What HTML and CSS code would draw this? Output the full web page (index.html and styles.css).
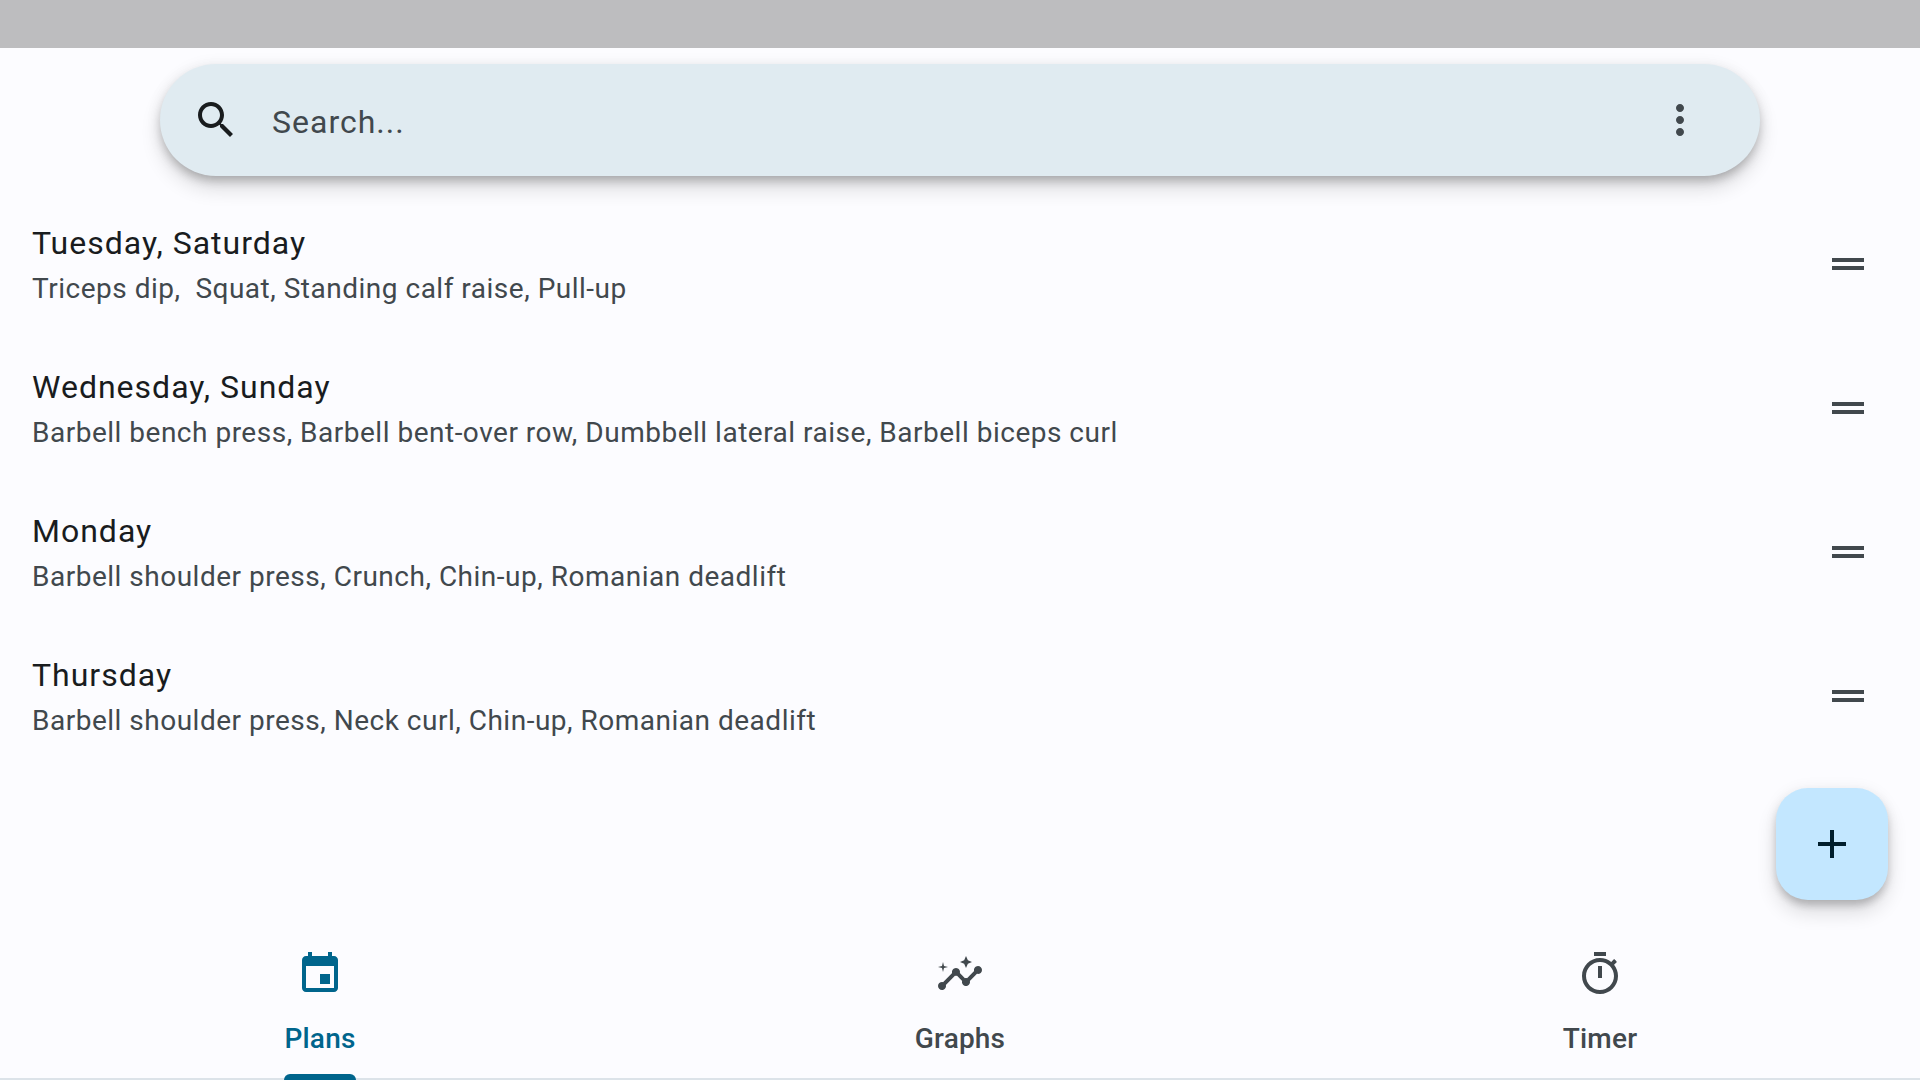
FILE: index.html
```html
<!DOCTYPE html>
<html lang="en">
<head>
  <meta charset="utf-8">
  <meta name="viewport" content="width=device-width, initial-scale=1">
  <title>Plans</title>
  <link rel="stylesheet" href="styles.css">
</head>
<body>
  <div class="app">
    <div class="status-bar"></div>

    <header class="top">
      <form class="search" role="search">
        <svg class="icon search-icon" viewBox="0 0 24 24" aria-hidden="true"><path d="M15.5 14h-.79l-.28-.27C15.41 12.59 16 11.11 16 9.5 16 5.91 13.09 3 9.5 3S3 5.91 3 9.5 5.91 16 9.5 16c1.61 0 3.09-.59 4.23-1.57l.27.28v.79l5 4.99L20.49 19l-4.99-5zm-6 0C7.01 14 5 11.99 5 9.5S7.01 5 9.5 5 14 7.01 14 9.5 11.99 14 9.5 14z"/></svg>
        <input class="search-input" type="text" placeholder="Search..." aria-label="Search">
        <button class="icon-button" type="button" aria-label="More options">
          <svg class="icon" viewBox="0 0 24 24" aria-hidden="true"><path d="M12 8c1.1 0 2-.9 2-2s-.9-2-2-2-2 .9-2 2 .9 2 2 2zm0 2c-1.1 0-2 .9-2 2s.9 2 2 2 2-.9 2-2-.9-2-2-2zm0 6c-1.1 0-2 .9-2 2s.9 2 2 2 2-.9 2-2-.9-2-2-2z"/></svg>
        </button>
      </form>
    </header>

    <main class="content">
      <ul class="plans">
        <li class="plan">
          <div class="plan-text">
            <h2 class="plan-title">Tuesday, Saturday</h2>
            <p class="plan-exercises">Triceps dip,  Squat, Standing calf raise, Pull-up</p>
          </div>
          <button class="icon-button" type="button" aria-label="Reorder">
            <svg class="icon" viewBox="0 0 24 24" aria-hidden="true"><path d="M20 9H4v2h16V9zM4 15h16v-2H4v2z"/></svg>
          </button>
        </li>
        <li class="plan">
          <div class="plan-text">
            <h2 class="plan-title">Wednesday, Sunday</h2>
            <p class="plan-exercises">Barbell bench press, Barbell bent-over row, Dumbbell lateral raise, Barbell biceps curl</p>
          </div>
          <button class="icon-button" type="button" aria-label="Reorder">
            <svg class="icon" viewBox="0 0 24 24" aria-hidden="true"><path d="M20 9H4v2h16V9zM4 15h16v-2H4v2z"/></svg>
          </button>
        </li>
        <li class="plan">
          <div class="plan-text">
            <h2 class="plan-title">Monday</h2>
            <p class="plan-exercises">Barbell shoulder press, Crunch, Chin-up, Romanian deadlift</p>
          </div>
          <button class="icon-button" type="button" aria-label="Reorder">
            <svg class="icon" viewBox="0 0 24 24" aria-hidden="true"><path d="M20 9H4v2h16V9zM4 15h16v-2H4v2z"/></svg>
          </button>
        </li>
        <li class="plan">
          <div class="plan-text">
            <h2 class="plan-title">Thursday</h2>
            <p class="plan-exercises">Barbell shoulder press, Neck curl, Chin-up, Romanian deadlift</p>
          </div>
          <button class="icon-button" type="button" aria-label="Reorder">
            <svg class="icon" viewBox="0 0 24 24" aria-hidden="true"><path d="M20 9H4v2h16V9zM4 15h16v-2H4v2z"/></svg>
          </button>
        </li>
      </ul>
    </main>

    <button class="fab" type="button" aria-label="Add plan">
      <svg class="icon" viewBox="0 0 24 24" aria-hidden="true"><path d="M19 13h-6v6h-2v-6H5v-2h6V5h2v6h6v2z"/></svg>
    </button>

    <nav class="tabs">
      <a class="tab tab-active" href="#plans" aria-current="page">
        <svg class="icon" viewBox="0 0 24 24" aria-hidden="true"><path d="M17 12h-5v5h5v-5zM16 1v2H8V1H6v2H5c-1.11 0-1.99.9-1.99 2L3 19c0 1.1.89 2 2 2h14c1.1 0 2-.9 2-2V5c0-1.1-.9-2-2-2h-1V1h-2zm3 18H5V8h14v11z"/></svg>
        <span class="tab-label">Plans</span>
      </a>
      <a class="tab" href="#graphs">
        <svg class="icon" viewBox="0 0 24 24" aria-hidden="true"><path d="M21 8c-1.45 0-2.26 1.44-1.93 2.51l-3.55 3.56c-.3-.09-.74-.09-1.04 0l-2.55-2.55C12.27 10.45 11.46 9 10 9c-1.45 0-2.27 1.44-1.93 2.52l-4.56 4.55C2.44 15.74 1 16.55 1 18c0 1.1.9 2 2 2 1.45 0 2.26-1.44 1.93-2.51l4.55-4.56c.3.09.74.09 1.04 0l2.55 2.55C12.73 16.55 13.54 18 15 18c1.45 0 2.27-1.44 1.93-2.52l3.56-3.55C21.56 12.26 23 11.45 23 10c0-1.1-.9-2-2-2z"/><path d="M15 9l.94-2.07L18 6l-2.06-.93L15 3l-.92 2.07L12 6l2.08.93zM3.5 11L4 9l2-.5L4 8l-.5-2L3 8l-2 .5L3 9z"/></svg>
        <span class="tab-label">Graphs</span>
      </a>
      <a class="tab" href="#timer">
        <svg class="icon" viewBox="0 0 24 24" aria-hidden="true"><path d="M15 1H9v2h6V1zm-4 13h2V8h-2v6zm8.03-6.61l1.42-1.42c-.43-.51-.9-.99-1.41-1.41l-1.42 1.42C16.07 4.74 14.12 4 12 4c-4.97 0-9 4.03-9 9s4.02 9 9 9 9-4.03 9-9c0-2.12-.74-4.07-1.97-5.61zM12 20c-3.87 0-7-3.13-7-7s3.13-7 7-7 7 3.13 7 7-3.13 7-7 7z"/></svg>
        <span class="tab-label">Timer</span>
      </a>
    </nav>
  </div>
</body>
</html>
```
FILE: styles.css
```css
:root {
  --surface: #fcfcff;
  --surface-tint: #e0ebf1;
  --on-surface: #191c1e;
  --on-surface-variant: #41484d;
  --primary: #00658c;
  --primary-container: #c3e7ff;
  --on-primary-container: #001e2c;
  --divider: #dce3e9;
  --raised: 0 6px 10px -2px rgba(0, 0, 0, 0.2), 0 12px 20px rgba(0, 0, 0, 0.14), 0 2px 16px rgba(0, 0, 0, 0.08);
}

* {
  box-sizing: border-box;
}

body {
  margin: 0;
  background: var(--surface);
  color: var(--on-surface);
  font-family: Roboto, "Noto Sans", sans-serif;
}

.app {
  display: flex;
  flex-direction: column;
  min-height: 100vh;
}

.status-bar {
  height: 48px;
  background: #bdbdbf;
}

.icon {
  display: block;
  flex: none;
  width: 48px;
  height: 48px;
  fill: currentColor;
}

.icon-button {
  flex: none;
  padding: 0;
  border: 0;
  background: none;
  color: var(--on-surface-variant);
  cursor: pointer;
}

.top {
  padding: 16px 32px;
}

.search {
  display: flex;
  align-items: center;
  gap: 32px;
  max-width: 1600px;
  height: 112px;
  margin: 0 auto;
  padding: 0 56px 0 32px;
  border-radius: 56px;
  background: var(--surface-tint);
  box-shadow: var(--raised);
}

.search-input {
  flex: 1;
  min-width: 0;
  padding: 4px 0 0;
  border: 0;
  outline: 0;
  background: none;
  color: var(--on-surface);
  font: 400 32px/48px Roboto, "Noto Sans", sans-serif;
  letter-spacing: 1px;
}

.search-input::placeholder {
  color: var(--on-surface-variant);
  opacity: 1;
}

.content {
  flex: 1;
}

.plans {
  margin: 0;
  padding: 0;
  list-style: none;
}

.plan {
  display: flex;
  align-items: center;
  justify-content: space-between;
  gap: 32px;
  padding: 27px 48px 27px 32px;
}

.plan-text {
  display: flex;
  flex-direction: column;
  gap: 2px;
}

.plan-title {
  margin: 0;
  font-size: 32px;
  font-weight: 400;
  line-height: 48px;
  letter-spacing: 1px;
}

.plan-exercises {
  margin: 0;
  color: var(--on-surface-variant);
  font-size: 28px;
  line-height: 40px;
  letter-spacing: 0.018em;
  white-space: pre-wrap;
}

.fab {
  position: fixed;
  right: 32px;
  bottom: 180px;
  display: grid;
  place-items: center;
  width: 112px;
  height: 112px;
  padding: 0;
  border: 0;
  border-radius: 32px;
  background: var(--primary-container);
  color: var(--on-primary-container);
  box-shadow: var(--raised);
  cursor: pointer;
}

.tabs {
  display: grid;
  grid-template-columns: repeat(3, 1fr);
  height: 144px;
  border-bottom: 2px solid var(--divider);
}

.tab {
  display: flex;
  flex-direction: column;
  align-items: center;
  gap: 20px;
  padding-top: 14px;
  color: var(--on-surface-variant);
  text-decoration: none;
}

.tab-active {
  color: var(--primary);
}

.tab-label {
  position: relative;
  font-size: 28px;
  font-weight: 500;
  line-height: 42px;
  letter-spacing: 0.007em;
}

.tab-active .tab-label::after {
  content: "";
  position: absolute;
  right: 0;
  bottom: -20px;
  left: 0;
  height: 6px;
  border-radius: 6px 6px 0 0;
  background: var(--primary);
}
```
